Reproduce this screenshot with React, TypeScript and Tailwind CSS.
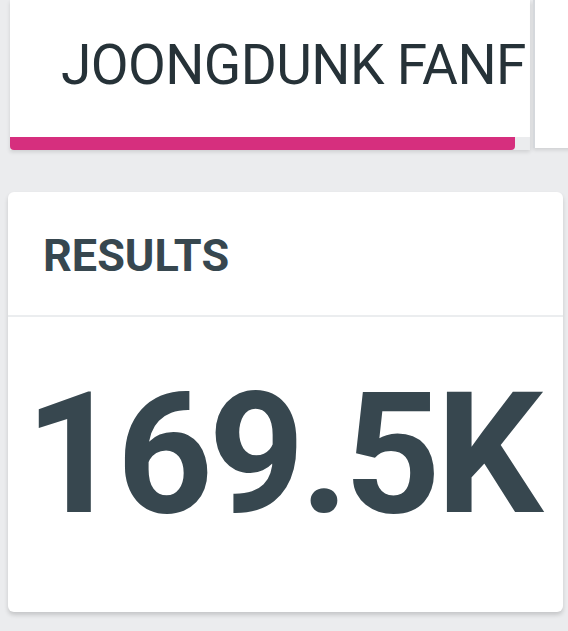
import React from 'react';

export default function App() {
  return (
    <div className="w-[568px] h-[631px] overflow-hidden bg-[#ebecee] font-['Roboto',sans-serif]">
      {/* TAB STRIP */}
      <div className="flex items-start pl-[10px] h-[150px]">
        <div className="flex flex-col w-[520px] shrink-0 shadow-[0_2px_4px_rgba(0,0,0,0.12)]">
          <div className="h-[137px] bg-white overflow-hidden pl-[51px] pt-[38px]">
            <span className="block whitespace-nowrap text-[55px] leading-none tracking-[-0.6px] text-[#263238]">JOONGDUNK FANF</span>
          </div>
          <div className="w-[505px] h-[13px] bg-[#d62f7e] rounded-b-[4px]" />
        </div>
        <div className="ml-[3px] w-[60px] h-[148px] shrink-0 bg-white border-l-2 border-[#d5d8dc] shadow-[0_2px_4px_rgba(0,0,0,0.12)]" />
      </div>

      {/* RESULTS CARD */}
      <div className="mt-[42px] ml-[8px] w-[555px] bg-white rounded-[6px] shadow-[0_3px_4px_rgba(0,0,0,0.16)]">
        <div className="h-[123px] pl-[35px] pt-[41px]">
          <span className="block text-[45px] leading-none font-bold text-[#37474f]">RESULTS</span>
        </div>
        <div className="h-[2px] bg-[#ebedef]" />
        <div className="h-[295px] pl-[17px] pt-[54px]">
          <span className="block whitespace-nowrap text-[168px] leading-none font-bold tracking-[-4.6px] text-[#37474f]">169.5K</span>
        </div>
      </div>
    </div>
  );
}
